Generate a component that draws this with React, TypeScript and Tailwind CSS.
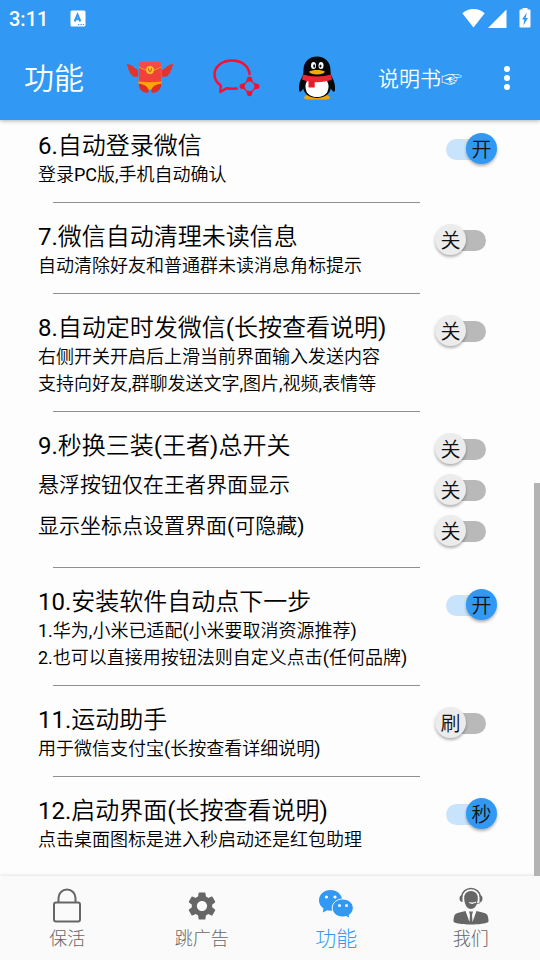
import { useState } from 'react'
import type { ReactNode } from 'react'
import clsx from 'clsx'
import { MdSettings } from 'react-icons/md'

type Toggle = { name: string; on: boolean; text: string; offText?: string }

type Item = {
  title: string
  notes?: string[]
  rows?: string[]
  toggles: Toggle[]
}

const items: Item[] = [
  {
    title: '6.自动登录微信',
    notes: ['登录PC版,手机自动确认'],
    toggles: [{ name: '自动登录微信', on: true, text: '开', offText: '关' }],
  },
  {
    title: '7.微信自动清理未读信息',
    notes: ['自动清除好友和普通群未读消息角标提示'],
    toggles: [{ name: '微信自动清理未读信息', on: false, text: '开', offText: '关' }],
  },
  {
    title: '8.自动定时发微信(长按查看说明)',
    notes: ['右侧开关开启后上滑当前界面输入发送内容', '支持向好友,群聊发送文字,图片,视频,表情等'],
    toggles: [{ name: '自动定时发微信', on: false, text: '开', offText: '关' }],
  },
  {
    title: '9.秒换三装(王者)总开关',
    rows: ['悬浮按钮仅在王者界面显示', '显示坐标点设置界面(可隐藏)'],
    toggles: [
      { name: '秒换三装总开关', on: false, text: '开', offText: '关' },
      { name: '悬浮按钮仅在王者界面显示', on: false, text: '开', offText: '关' },
      { name: '显示坐标点设置界面', on: false, text: '开', offText: '关' },
    ],
  },
  {
    title: '10.安装软件自动点下一步',
    notes: ['1.华为,小米已适配(小米要取消资源推荐)', '2.也可以直接用按钮法则自定义点击(任何品牌)'],
    toggles: [{ name: '安装软件自动点下一步', on: true, text: '开', offText: '关' }],
  },
  {
    title: '11.运动助手',
    notes: ['用于微信支付宝(长按查看详细说明)'],
    toggles: [{ name: '运动助手', on: false, text: '刷' }],
  },
  {
    title: '12.启动界面(长按查看说明)',
    notes: ['点击桌面图标是进入秒启动还是红包助理'],
    toggles: [{ name: '启动界面', on: true, text: '秒' }],
  },
]

function Switch({ name, on, text, offText }: Toggle) {
  const [checked, setChecked] = useState(on)

  return (
    <label className="relative flex h-[41px] w-[62px] cursor-pointer items-center justify-center">
      <input
        type="checkbox"
        role="switch"
        aria-label={name}
        checked={checked}
        onChange={(e) => setChecked(e.target.checked)}
        className="sr-only"
      />
      <span className={clsx('h-[21px] w-10 rounded-full', checked ? 'bg-[#c8e4fc]' : 'bg-[#b9b9b9]')} />
      <span
        className={clsx(
          'absolute top-1 flex size-[31px] items-center justify-center rounded-full pt-0.5 text-xl leading-none text-[#111] shadow-[0_2px_3px_rgba(0,0,0,0.3)]',
          checked ? 'right-0 bg-[#3199f4]' : 'left-0 bg-[#ececec]',
        )}
      >
        {checked ? text : offText ?? text}
      </span>
    </label>
  )
}

function Section({ item, first, last }: { item: Item; first: boolean; last: boolean }) {
  return (
    <section className={clsx('flex gap-[15px] pl-[38px] pr-[43px]', first ? 'pt-[9px]' : 'pt-[17px]')}>
      <div className="flex min-w-0 flex-1 flex-col">
        <h2 className="mt-[3px] mb-px whitespace-nowrap text-2xl leading-7">{item.title}</h2>
        {item.notes?.map((note) => (
          <p key={note} className="whitespace-nowrap text-lg leading-[27px]">{note}</p>
        ))}
        {item.rows && (
          <div className="mt-1">
            {item.rows.map((row) => (
              <p key={row} className="whitespace-nowrap text-[21px] leading-[41px]">{row}</p>
            ))}
          </div>
        )}
        {!last && (
          <div className="mt-auto pt-3.5">
            <hr className="ml-[15px] border-t border-[#909090]" />
          </div>
        )}
      </div>
      <div className={clsx('flex flex-col', !last && 'pb-4')}>
        {item.toggles.map((toggle) => (
          <Switch key={toggle.name} {...toggle} />
        ))}
      </div>
    </section>
  )
}

function StatusBar() {
  return (
    <div className="flex h-9 items-center justify-between pl-[9px] pr-[9px] pt-px">
      <div className="flex items-center gap-[22px]">
        <span className="font-[Roboto] text-xl font-medium">3:11</span>
        <svg width="16" height="17" viewBox="0 0 16 17" aria-hidden="true">
          <rect x="0.5" y="0.5" width="15" height="16" rx="1.5" fill="#fff" />
          <path d="M4.6 11.5 7.5 4.5 10.4 11.5M5.5 9.3h4" stroke="#3199f4" strokeWidth="2" fill="none" />
          <path d="M8 14.5h1.3M10.4 14.5h1.3M12.8 14.5h1.3" stroke="#3199f4" strokeWidth="1.1" />
        </svg>
      </div>
      <div className="flex items-center">
        <svg width="23" height="20" viewBox="0 0 23 20" fill="#fff" aria-hidden="true">
          <path d="M11.5 18.5.3 4.2C3.4 1.5 7.3 0 11.5 0s8.1 1.5 11.2 4.2z" />
        </svg>
        <svg className="ml-[3px]" width="19" height="20" viewBox="0 0 19 20" fill="#fff" aria-hidden="true">
          <path d="M18.5.5v18.5H0z" />
        </svg>
        <svg className="ml-3" width="12" height="21" viewBox="0 0 12 21" aria-hidden="true">
          <path d="M1.5 1.5H3.5V0h5v1.5h2q1 0 1 1v16q0 1-1 1h-9q-1 0-1-1v-16q0-1 1-1z" fill="#fff" />
          <path d="M7.8 4.5 3 11.5h2.3l-1 6L9 10H6.7z" fill="#3199f4" />
        </svg>
      </div>
    </div>
  )
}

function RedPacketIcon() {
  return (
    <svg width="48" height="34" viewBox="0 0 48 34" aria-hidden="true">
      <g fill="#e0352f">
        <path d="M12 9C9.5 8 7.5 5.3 5.3 4.2 4 3.5 2 3.2.8 2.7c.2 2 .9 3.300 2 4.300l-.9-.1c.3 1.900 1.200 3 2.400 3.800l-.9.1c.5 1.700 1.500 2.700 2.700 3.200l-.6.5c1.800 1.500 4 1.500 6.500 1z" />
        <path d="M36 9c2.500-1 4.500-3.700 6.700-4.800 1.300-.7 3.300-1 4.500-1.500-.2 2-.9 3.300-2 4.300l.9-.1c-.3 1.900-1.200 3-2.400 3.800l.9.1c-.5 1.700-1.500 2.700-2.700 3.200l.6.5c-1.800 1.500-4 1.500-6.500 1z" />
      </g>
      <path d="M12.500 18h23v5.500L31 27l-5.500 1.500h-3L17 27l-4.500-3.500z" fill="#f9a50d" />
      <path d="M15.500 1h17a2.500 2.500 0 0 1 2.500 2.500l.4 17q-11.400 1.300-22.800 0L13 3.500A2.500 2.500 0 0 1 15.500 1z" fill="#f0413a" />
      <path d="M15.500 1h17A2.500 2.500 0 0 1 35 3.500V5Q24 12 13 5V3.500A2.500 2.500 0 0 1 15.500 1z" fill="#f64b44" />
      <path d="M13 6Q18 9.500 24 9.500T35 6" stroke="#f0a51e" strokeWidth="1" fill="none" />
      <circle cx="24" cy="9" r="3.900" fill="#fbc02a" />
      <path d="M22.500 7.200v2.500q1.500 2 3 0V7.200M24 8.500v3" stroke="#d9641b" strokeWidth="1" fill="none" />
      <path d="M12.700 22.500c6 .8 10 3.500 10 7.700 0 1.500-1.200 2-2.700 1.600-4.500-.9-7.300-4-7.300-9.300z" fill="#df2c27" />
      <path d="M35.300 22.500c-6 .8-10 3.500-10 7.700 0 1.500 1.200 2 2.700 1.600 4.500-.9 7.300-4 7.300-9.300z" fill="#df2c27" />
    </svg>
  )
}

function ChatIcon() {
  return (
    <svg width="48" height="40" viewBox="0 0 48 40" fill="none" stroke="#fa0f30" aria-hidden="true">
      <path d="M37.500 16C37 8.500 30 2.500 20 2.500S2.500 8.500 2.500 16.500c0 5 2.500 8.500 6.300 11L8.300 34l6.500-3.800c3 .8 6.500.6 10 .4" strokeWidth="2.500" strokeLinecap="round" strokeLinejoin="round" />
      <circle cx="37.500" cy="28.300" r="5.500" strokeWidth="1" />
      <g fill="#fa0f30" stroke="none">
        <circle cx="37.500" cy="21" r="2.600" />
        <circle cx="44.800" cy="28.300" r="2.600" />
        <circle cx="37.500" cy="35.600" r="2.600" />
        <circle cx="30.200" cy="28.300" r="2.600" />
        <path d="m35 21-1.500 4h8L40 21zM35 35.600l-1.500-4h8l-1.500 4z" />
        <path d="m30.200 25.800 4-1.500v8l-4-1.500zM44.800 25.800l-4-1.500v8l4-1.500z" />
      </g>
      <circle cx="37.500" cy="28.300" r="4.800" fill="#3199f4" stroke="none" />
    </svg>
  )
}

function PenguinIcon() {
  return (
    <svg width="38" height="44" viewBox="0 0 38 44" aria-hidden="true">
      <path d="M6 41.500c1-2 5-4 13-4s12 2 13 4c0 2-4 2-6.500 2h-13c-2.500 0-6.500 0-6.500-2z" fill="#f5a50b" />
      <path d="M19 .5C11 .5 5.500 6 5.500 14c0 3-.5 4.500-1.200 6.500C2 24.500.5 29 1 34c.3 3 2.600 1.500 4.200-1.500C6.500 38.500 12 42 19 42s12.500-3.500 13.800-9.500C34.400 35.500 36.700 37 37 34c.5-5-1-9.500-3.300-13.500-.7-2-1.200-3.500-1.200-6.500C32.500 6 27 .5 19 .5z" fill="#070707" />
      <path d="M9 25h20c2 3 2 7 .5 10.500C27.500 39.500 23.500 41 19 41S10.500 39.500 8.500 35.500C7 32 7 28 9 25z" fill="#fff" />
      <path d="M5 18.500c8 2.500 20 2.500 28 0l1 5C25 27 13 27 4 23.500z" fill="#ef2430" />
      <path d="M10.500 24.500h6.200v7h-6.200z" fill="#e51d2b" />
      <ellipse cx="15.500" cy="9.500" rx="2.500" ry="3.600" fill="#fff" />
      <ellipse cx="23" cy="9.500" rx="2.500" ry="3.600" fill="#fff" />
      <ellipse cx="16.200" cy="10" rx="1" ry="1.700" fill="#111" />
      <ellipse cx="22.500" cy="10" rx="1" ry="1.500" fill="#111" />
      <path d="M11 15.800c2.500-2.500 13.500-2.500 16 0-1 1.700-4 2.700-8 2.700s-7-1-8-2.700z" fill="#f8a80c" />
    </svg>
  )
}

function LockIcon() {
  return (
    <svg width="28" height="36" viewBox="0 0 28 36" fill="none" stroke="currentColor" strokeWidth="2" aria-hidden="true">
      <path d="M5.500 14.500V10a8.500 8.500 0 0 1 17 0V14.500" />
      <rect x="1" y="14.500" width="26" height="19" rx="2" />
    </svg>
  )
}

function WeChatIcon() {
  return (
    <svg width="36" height="34" viewBox="0 0 36 34" fill="currentColor" aria-hidden="true">
      <path d="M12.500 1C6 1 1 5.500 1 11.500c0 3.200 1.700 6 4.500 8L4.800 23.500l4.400-2.200c1 .3 2.200.4 3.300.4 6.500 0 11.800-4.500 11.800-10.200S19 1 12.500 1z" />
      <path
        d="M24.700 10c-6 0-10.500 4-10.500 9s4.500 9 10.500 9c1.200 0 2.300-.2 3.300-.5l4 2-.9-3.300c2.600-1.700 4.200-4.300 4.200-7.200 0-5-4.600-9-10.600-9z"
        stroke="#fafafa"
        strokeWidth="1"
      />
      <g fill="#fafafa">
        <circle cx="8.500" cy="8" r="1.600" />
        <circle cx="17" cy="8" r="1.600" />
        <circle cx="21.500" cy="16.500" r="1.500" />
        <circle cx="28.500" cy="16.500" r="1.500" />
      </g>
    </svg>
  )
}

function AgentIcon() {
  return (
    <svg width="36" height="38" viewBox="0 0 36 38" fill="currentColor" aria-hidden="true">
      <path d="M8.500 10C9 5 13 1.500 18 1.500S27 5 27.500 10" fill="none" stroke="currentColor" strokeWidth="1.500" />
      <path d="M9.500 8v7c-2 0-3-1.500-3-3.500S7.500 8 9.500 8zM26.500 8v7c2 0 3-1.500 3-3.500S28.500 8 26.500 8z" />
      <path d="M18 4c4 0 7 3 6.800 7 0 5-2 9.500-4.800 10.500q-2 .8-4 0c-2.800-1-4.800-5.500-4.800-10.500C11 7 14 4 18 4z" />
      <path d="M15.500 15q4 1 8-.5c-.5 1.500-1.500 2-3 2.300-2 .3-4-.3-5-1.800z" fill="#fafafa" />
      <path d="M28 14c-.5 2-3 3-8 3" fill="none" stroke="currentColor" strokeWidth="1" />
      <path d="M12.500 24l4 11 .5-7-1-3.500h4L19 28l.5 7 4-11c4 1.200 8.500 1.700 10.500 3.500 1.200 1.700 1.500 4.500 1.500 7.300C31 38.500 5 38.500.5 34.800c0-2.800.3-5.600 1.500-7.300 2-1.800 6.500-2.300 10.500-3.500z" />
    </svg>
  )
}

const tabs: { label: string; icon: ReactNode; active?: boolean }[] = [
  { label: '保活', icon: <LockIcon /> },
  { label: '跳广告', icon: <MdSettings size={34} /> },
  { label: '功能', icon: <WeChatIcon />, active: true },
  { label: '我们', icon: <AgentIcon /> },
]

export default function App() {
  return (
    <div className="flex min-h-screen flex-col bg-[#fdfdfd] font-[Roboto,'Noto_Sans_CJK_SC_DemiLight','Noto_Sans_CJK_SC',sans-serif] text-black">
      <header className="relative z-10 bg-[#3199f4] text-white shadow-[0_1px_4px_rgba(0,0,0,0.3)]">
        <StatusBar />
        <div className="flex h-[84px] items-center pl-6 pr-[23px]">
          <h1 className="text-[30px]">功能</h1>
          <div className="flex flex-1 items-center justify-between px-[42px]">
            <button type="button" aria-label="红包"><RedPacketIcon /></button>
            <button type="button" aria-label="群聊"><ChatIcon /></button>
            <button type="button" aria-label="QQ"><PenguinIcon /></button>
          </div>
          <a href="#manual" className="whitespace-nowrap pt-1 text-[21px]">说明书☞</a>
          <button type="button" aria-label="更多" className="ml-[35px] flex w-5 flex-col items-center gap-[3px]">
            <span className="size-1.5 rounded-full bg-white" />
            <span className="size-1.5 rounded-full bg-white" />
            <span className="size-1.5 rounded-full bg-white" />
          </button>
        </div>
      </header>

      <main className="relative flex-1">
        {items.map((item, i) => (
          <Section key={item.title} item={item} first={i === 0} last={i === items.length - 1} />
        ))}
        {/* scroll thumb */}
        <div className="absolute bottom-0 right-0 h-[52%] w-1.5 bg-[#b3b3b3]" />
      </main>

      <nav className="grid h-[84px] grid-cols-4 bg-[#fafafa] pr-0.5 font-['Noto_Sans_CJK_SC',sans-serif] font-light text-[#666] shadow-[0_-1px_3px_rgba(0,0,0,0.1)]">
        {tabs.map(({ label, icon, active }) => (
          <a
            key={label}
            href={`#${label}`}
            className={clsx('flex flex-col items-center pt-[11px]', active && 'text-[#3199f4]')}
          >
            <span className="flex h-[38px] items-center">{icon}</span>
            <span className={clsx('leading-6', active ? 'text-[21px]' : 'text-lg')}>{label}</span>
          </a>
        ))}
      </nav>
    </div>
  )
}
